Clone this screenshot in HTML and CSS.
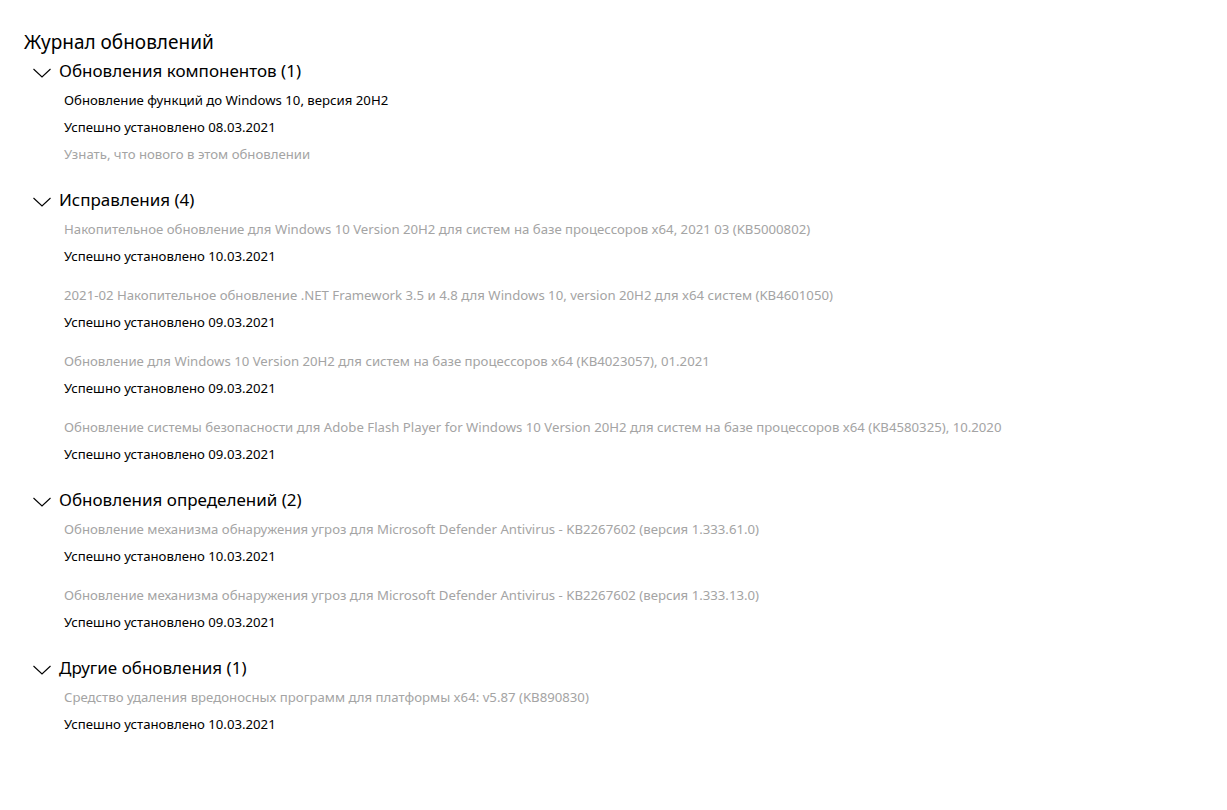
FILE: index.html
```html
<!DOCTYPE html>
<html lang="ru">
<head>
    <meta charset="UTF-8">
    <title>Журнал обновлений</title>
    <link rel="stylesheet" href="styles.css">
</head>
<body>
    <div class="page">
        <h1 class="title">Журнал обновлений</h1>

        <div class="group">
            <div class="group-head">
                <svg class="chevron" width="18" height="10" viewBox="0 0 18 10"><path d="M0.5 1 L9 9 L17.5 1" fill="none" stroke="#000" stroke-width="1.1"/></svg>
                <span>Обновления компонентов (1)</span>
            </div>
            <div class="item">
                <div class="line">Обновление функций до Windows 10, версия 20H2</div>
                <div class="line">Успешно установлено 08.03.2021</div>
                <div class="line muted">Узнать, что нового в этом обновлении</div>
            </div>
        </div>

        <div class="group">
            <div class="group-head">
                <svg class="chevron" width="18" height="10" viewBox="0 0 18 10"><path d="M0.5 1 L9 9 L17.5 1" fill="none" stroke="#000" stroke-width="1.1"/></svg>
                <span>Исправления (4)</span>
            </div>
            <div class="item">
                <div class="line muted">Накопительное обновление для Windows 10 Version 20H2 для систем на базе процессоров x64, 2021 03 (KB5000802)</div>
                <div class="line">Успешно установлено 10.03.2021</div>
            </div>
            <div class="item">
                <div class="line muted">2021-02 Накопительное обновление .NET Framework 3.5 и 4.8 для Windows 10, version 20H2 для x64 систем (KB4601050)</div>
                <div class="line">Успешно установлено 09.03.2021</div>
            </div>
            <div class="item">
                <div class="line muted">Обновление для Windows 10 Version 20H2 для систем на базе процессоров x64 (KB4023057), 01.2021</div>
                <div class="line">Успешно установлено 09.03.2021</div>
            </div>
            <div class="item">
                <div class="line muted">Обновление системы безопасности для Adobe Flash Player for Windows 10 Version 20H2 для систем на базе процессоров x64 (KB4580325), 10.2020</div>
                <div class="line">Успешно установлено 09.03.2021</div>
            </div>
        </div>

        <div class="group">
            <div class="group-head">
                <svg class="chevron" width="18" height="10" viewBox="0 0 18 10"><path d="M0.5 1 L9 9 L17.5 1" fill="none" stroke="#000" stroke-width="1.1"/></svg>
                <span>Обновления определений (2)</span>
            </div>
            <div class="item">
                <div class="line muted">Обновление механизма обнаружения угроз для Microsoft Defender Antivirus - KB2267602 (версия 1.333.61.0)</div>
                <div class="line">Успешно установлено 10.03.2021</div>
            </div>
            <div class="item">
                <div class="line muted">Обновление механизма обнаружения угроз для Microsoft Defender Antivirus - KB2267602 (версия 1.333.13.0)</div>
                <div class="line">Успешно установлено 09.03.2021</div>
            </div>
        </div>

        <div class="group">
            <div class="group-head">
                <svg class="chevron" width="18" height="10" viewBox="0 0 18 10"><path d="M0.5 1 L9 9 L17.5 1" fill="none" stroke="#000" stroke-width="1.1"/></svg>
                <span>Другие обновления (1)</span>
            </div>
            <div class="item">
                <div class="line muted">Средство удаления вредоносных программ для платформы x64: v5.87 (KB890830)</div>
                <div class="line">Успешно установлено 10.03.2021</div>
            </div>
        </div>
    </div>
</body>
</html>
```

FILE: styles.css
```css
* {
    margin: 0;
    padding: 0;
    box-sizing: border-box;
}

body {
    background: #fff;
    color: #000;
    font-family: "Noto Sans", sans-serif;
}

.page {
    padding: 28px 0 0 24px;
}

.title {
    font-size: 19px;
    font-weight: normal;
    line-height: 28px;
    height: 28px;
}

.group {
    margin-top: 3px;
}

.group + .group {
    margin-top: 24px;
}

.group-head {
    display: flex;
    align-items: center;
    height: 24px;
    font-size: 17px;
    line-height: 24px;
    padding-left: 9px;
}

.chevron {
    margin-right: 8px;
    margin-top: 4px;
}

.item {
    padding-left: 40px;
    margin-top: 19px;
}

.group-head + .item {
    margin-top: 7px;
}

.line {
    font-size: 13.2px;
    line-height: 20px;
    height: 20px;
    white-space: nowrap;
}

.line + .line {
    margin-top: 7px;
}

.muted {
    color: #a4a4a4;
}
```
